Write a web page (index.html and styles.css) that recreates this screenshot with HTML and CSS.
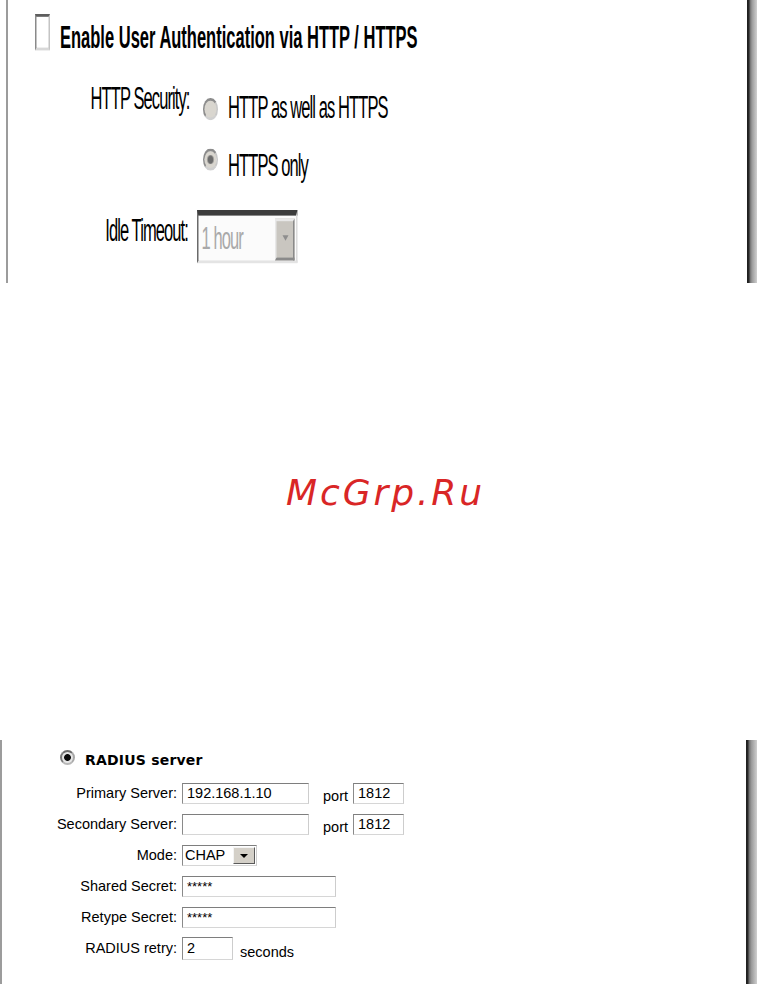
FILE: index.html
```html
<!DOCTYPE html>
<html lang="en">
<head>
    <meta charset="UTF-8">
    <meta name="viewport" content="width=device-width, initial-scale=1.0">
    <title>User Authentication</title>
    <link rel="stylesheet" href="styles.css">
</head>
<body>
    <div class="panel panel_top">
        <div class="panel_body">
            <!-- the http auth form is drawn small and stretched to fill the panel -->
            <div class="auth">
                <div class="auth_title">
                    <span class="check"></span>
                    <span class="auth_title_text">Enable User Authentication via HTTP / HTTPS</span>
                </div>
                <div class="auth_row auth_row_security">
                    <span class="auth_label">HTTP Security:</span>
                    <span class="auth_option">
                        <span class="radio"></span>
                        <span class="auth_option_text">HTTP as well as HTTPS</span>
                    </span>
                </div>
                <div class="auth_row auth_row_https">
                    <span class="auth_label"></span>
                    <span class="auth_option">
                        <span class="radio radio_checked"></span>
                        <span class="auth_option_text">HTTPS only</span>
                    </span>
                </div>
                <div class="auth_row auth_row_idle">
                    <span class="auth_label">Idle Timeout:</span>
                    <span class="auth_select">
                        <span class="auth_select_value">1 hour</span>
                        <span class="auth_select_button"><span class="arrow arrow_grey"></span></span>
                    </span>
                </div>
            </div>
        </div>
        <div class="panel_edge"></div>
    </div>

    <div class="watermark">McGrp.Ru</div>

    <div class="panel panel_bottom">
        <div class="panel_body">
            <div class="radius">
                <div class="radius_head">
                    <span class="radius_radio"></span>
                    <span class="radius_head_text">RADIUS server</span>
                </div>
                <div class="radius_form">
                    <span class="radius_label">Primary Server:</span>
                    <span class="field">
                        <span class="text_input input_server">192.168.1.10</span>
                        <span class="field_note note_port">port</span>
                        <span class="text_input input_port">1812</span>
                    </span>

                    <span class="radius_label">Secondary Server:</span>
                    <span class="field">
                        <span class="text_input input_server"></span>
                        <span class="field_note note_port">port</span>
                        <span class="text_input input_port">1812</span>
                    </span>

                    <span class="radius_label">Mode:</span>
                    <span class="field">
                        <span class="mode_select">
                            <span class="mode_value">CHAP</span>
                            <span class="mode_button"><span class="arrow"></span></span>
                        </span>
                    </span>

                    <span class="radius_label">Shared Secret:</span>
                    <span class="field">
                        <span class="text_input input_secret">*****</span>
                    </span>

                    <span class="radius_label">Retype Secret:</span>
                    <span class="field">
                        <span class="text_input input_secret">*****</span>
                    </span>

                    <span class="radius_label">RADIUS retry:</span>
                    <span class="field">
                        <span class="text_input input_retry">2</span>
                        <span class="field_note note_seconds">seconds</span>
                    </span>
                </div>
            </div>
        </div>
        <div class="panel_edge"></div>
    </div>
</body>
</html>
```

FILE: styles.css
```css
body {
    margin: 0;
    padding: 0;
    background-color: #ffffff;
    font-family: "Liberation Sans", Arial, sans-serif;
    color: #000000;
}

/* framed panels with the dark shaded right edge */
.panel {
    display: flex;
    flex-direction: row;
}

.panel_body {
    flex: 1;
    border-left: 2px solid #9c9c9c;
    overflow: hidden;
}

.panel_edge {
    width: 10px;
    background: linear-gradient(90deg, #1c1c1c 0, #2a2a2a 2px, #6e6e6e 3px, #9a9a9a 50%, #cfcfcf 100%);
}

.panel_top {
    height: 283px;
    margin-left: 6px;
}

.panel_bottom {
    height: 244px;
}

.panel_bottom .panel_edge {
    width: 11px;
}

/* ---- http auth form ---- */

.auth {
    width: 492px;
    padding-top: 5px;
    font-size: 11px;
    line-height: 13px;
    letter-spacing: -0.6px;
    transform: scale(1.5, 2.8);
    transform-origin: 0 0;
}

.auth_title {
    display: flex;
    align-items: center;
    height: 13px;
    margin-left: 18px;
    gap: 6.7px;
}

.check {
    width: 10px;
    height: 13px;
    box-sizing: border-box;
    background-color: #ffffff;
    border: 1px solid;
    border-color: #5e5e5e #c4c4c4 #d8d8d8 #8a8a8a;
}

.auth_title_text {
    font-weight: bold;
    letter-spacing: 0;
    padding-top: 4px;
}

.auth_row {
    display: flex;
    align-items: center;
}

.auth_row_security {
    height: 14px;
    margin-top: 13.8px;
}

.auth_row_https {
    height: 14px;
    margin-top: 6.2px;
}

.auth_row_idle {
    height: 19px;
    margin-top: 9px;
}

.auth_label {
    width: 121px;
    flex: none;
    text-align: right;
}

.auth_row_security .auth_label {
    margin-bottom: 7px;
}

.auth_row_idle .auth_label {
    margin-bottom: 4.4px;
    padding-right: 1px;
    box-sizing: border-box;
}

.auth_option {
    display: flex;
    align-items: center;
    gap: 6.7px;
    margin-left: 9px;
}

.radio {
    width: 10px;
    height: 8.3px;
    box-sizing: border-box;
    border-radius: 50%;
    border: 1px solid;
    border-color: #8c8c8c #c8c8c8 #d0d0d0 #8c8c8c;
    background-color: #d9d6cf;
}

.radio_checked {
    background: radial-gradient(ellipse at 50% 50%, #6c6c6c 0, #6c6c6c 32%, #d9d6cf 42%);
}

.auth_row_https .radio {
    margin-bottom: 3.8px;
}

.auth_row_https .auth_option_text {
    margin-top: 1.6px;
}

.auth_select {
    display: flex;
    align-items: center;
    justify-content: space-between;
    width: 67px;
    height: 19px;
    box-sizing: border-box;
    margin-left: 5px;
    padding: 0.9px 0.7px 0 2px;
    border-style: solid;
    border-width: 2px 1px 1px 1px;
    border-color: #3c3c3c #dcdcdc #e4e4e4 #6a6a6a;
    background-color: #fbfbfb;
}

.auth_select_value {
    color: #a9a9a9;
    padding-top: 0.6px;
}

.auth_select_button {
    display: flex;
    align-items: center;
    justify-content: center;
    width: 13.4px;
    height: 14.2px;
    box-sizing: border-box;
    border: 1px solid;
    border-color: #e8e8e8 #8a8a8a #8a8a8a #e8e8e8;
    background-color: #c9c6c0;
}

.arrow {
    width: 0;
    height: 0;
    border-left: 4px solid transparent;
    border-right: 4px solid transparent;
    border-top: 4px solid #000000;
}

.arrow_grey {
    border-left-width: 2.5px;
    border-right-width: 2.5px;
    border-top: 2px solid #8e8e8e;
}

/* ---- watermark ---- */

.watermark {
    height: 457px;
    box-sizing: border-box;
    padding: 191.5px 0 0 286px;
    font-family: "DejaVu Sans", Verdana, sans-serif;
    font-style: oblique;
    font-size: 36px;
    line-height: 36px;
    letter-spacing: 2.9px;
    color: #d92626;
}

/* ---- radius form ---- */

.radius {
    padding-top: 10px;
    font-size: 14.5px;
}

.radius_head {
    display: flex;
    align-items: center;
    height: 15px;
    margin-left: 58px;
    gap: 10px;
}

.radius_radio {
    width: 15px;
    height: 15px;
    box-sizing: border-box;
    border-radius: 50%;
    border: 2px solid;
    border-color: #6e6e6e #a8a8a8 #b8b8b8 #7a7a7a;
    background: radial-gradient(circle at 50% 50%, #0c0c0c 0, #0c0c0c 3px, #e6e6e6 3.8px);
}

.radius_head_text {
    font-family: "DejaVu Sans", Verdana, sans-serif;
    font-weight: bold;
    font-size: 14px;
    line-height: 15px;
    letter-spacing: 0.2px;
    padding-top: 6px;
}

.radius_form {
    display: grid;
    grid-template-columns: 175px auto;
    column-gap: 5px;
    row-gap: 10px;
    align-items: center;
    margin-top: 18px;
}

.radius_label {
    text-align: right;
    line-height: 17px;
}

.field {
    display: flex;
    align-items: center;
    height: 21px;
}

.text_input {
    display: block;
    height: 21px;
    box-sizing: border-box;
    padding: 0 4px;
    line-height: 19px;
    border: 1px solid;
    border-color: #7e7e7e #cdcdcd #d6d6d6 #8a8a8a;
    background-color: #ffffff;
    white-space: nowrap;
    overflow: hidden;
}

.input_server {
    width: 127px;
}

.input_port {
    width: 51px;
}

.input_secret {
    width: 154px;
    font-size: 13px;
}

.input_retry {
    width: 51px;
    height: 23px;
    line-height: 21px;
}

.field_note {
    align-self: flex-end;
    line-height: 16px;
}

.note_port {
    margin: 0 5px 0 14px;
}

.note_seconds {
    margin-left: 7px;
    margin-bottom: -1px;
}

.mode_select {
    display: flex;
    align-items: center;
    justify-content: space-between;
    width: 75px;
    height: 21px;
    box-sizing: border-box;
    padding: 0 1px 0 2px;
    border: 1px solid;
    border-color: #7e7e7e #cdcdcd #d6d6d6 #8a8a8a;
    background-color: #ffffff;
}

.mode_value {
    line-height: 19px;
}

.mode_button {
    display: flex;
    align-items: center;
    justify-content: center;
    width: 22px;
    height: 17px;
    box-sizing: border-box;
    border: 1px solid;
    border-color: #f4f4f4 #5a5a5a #5a5a5a #f4f4f4;
    background-color: #d4d0c8;
}
```
